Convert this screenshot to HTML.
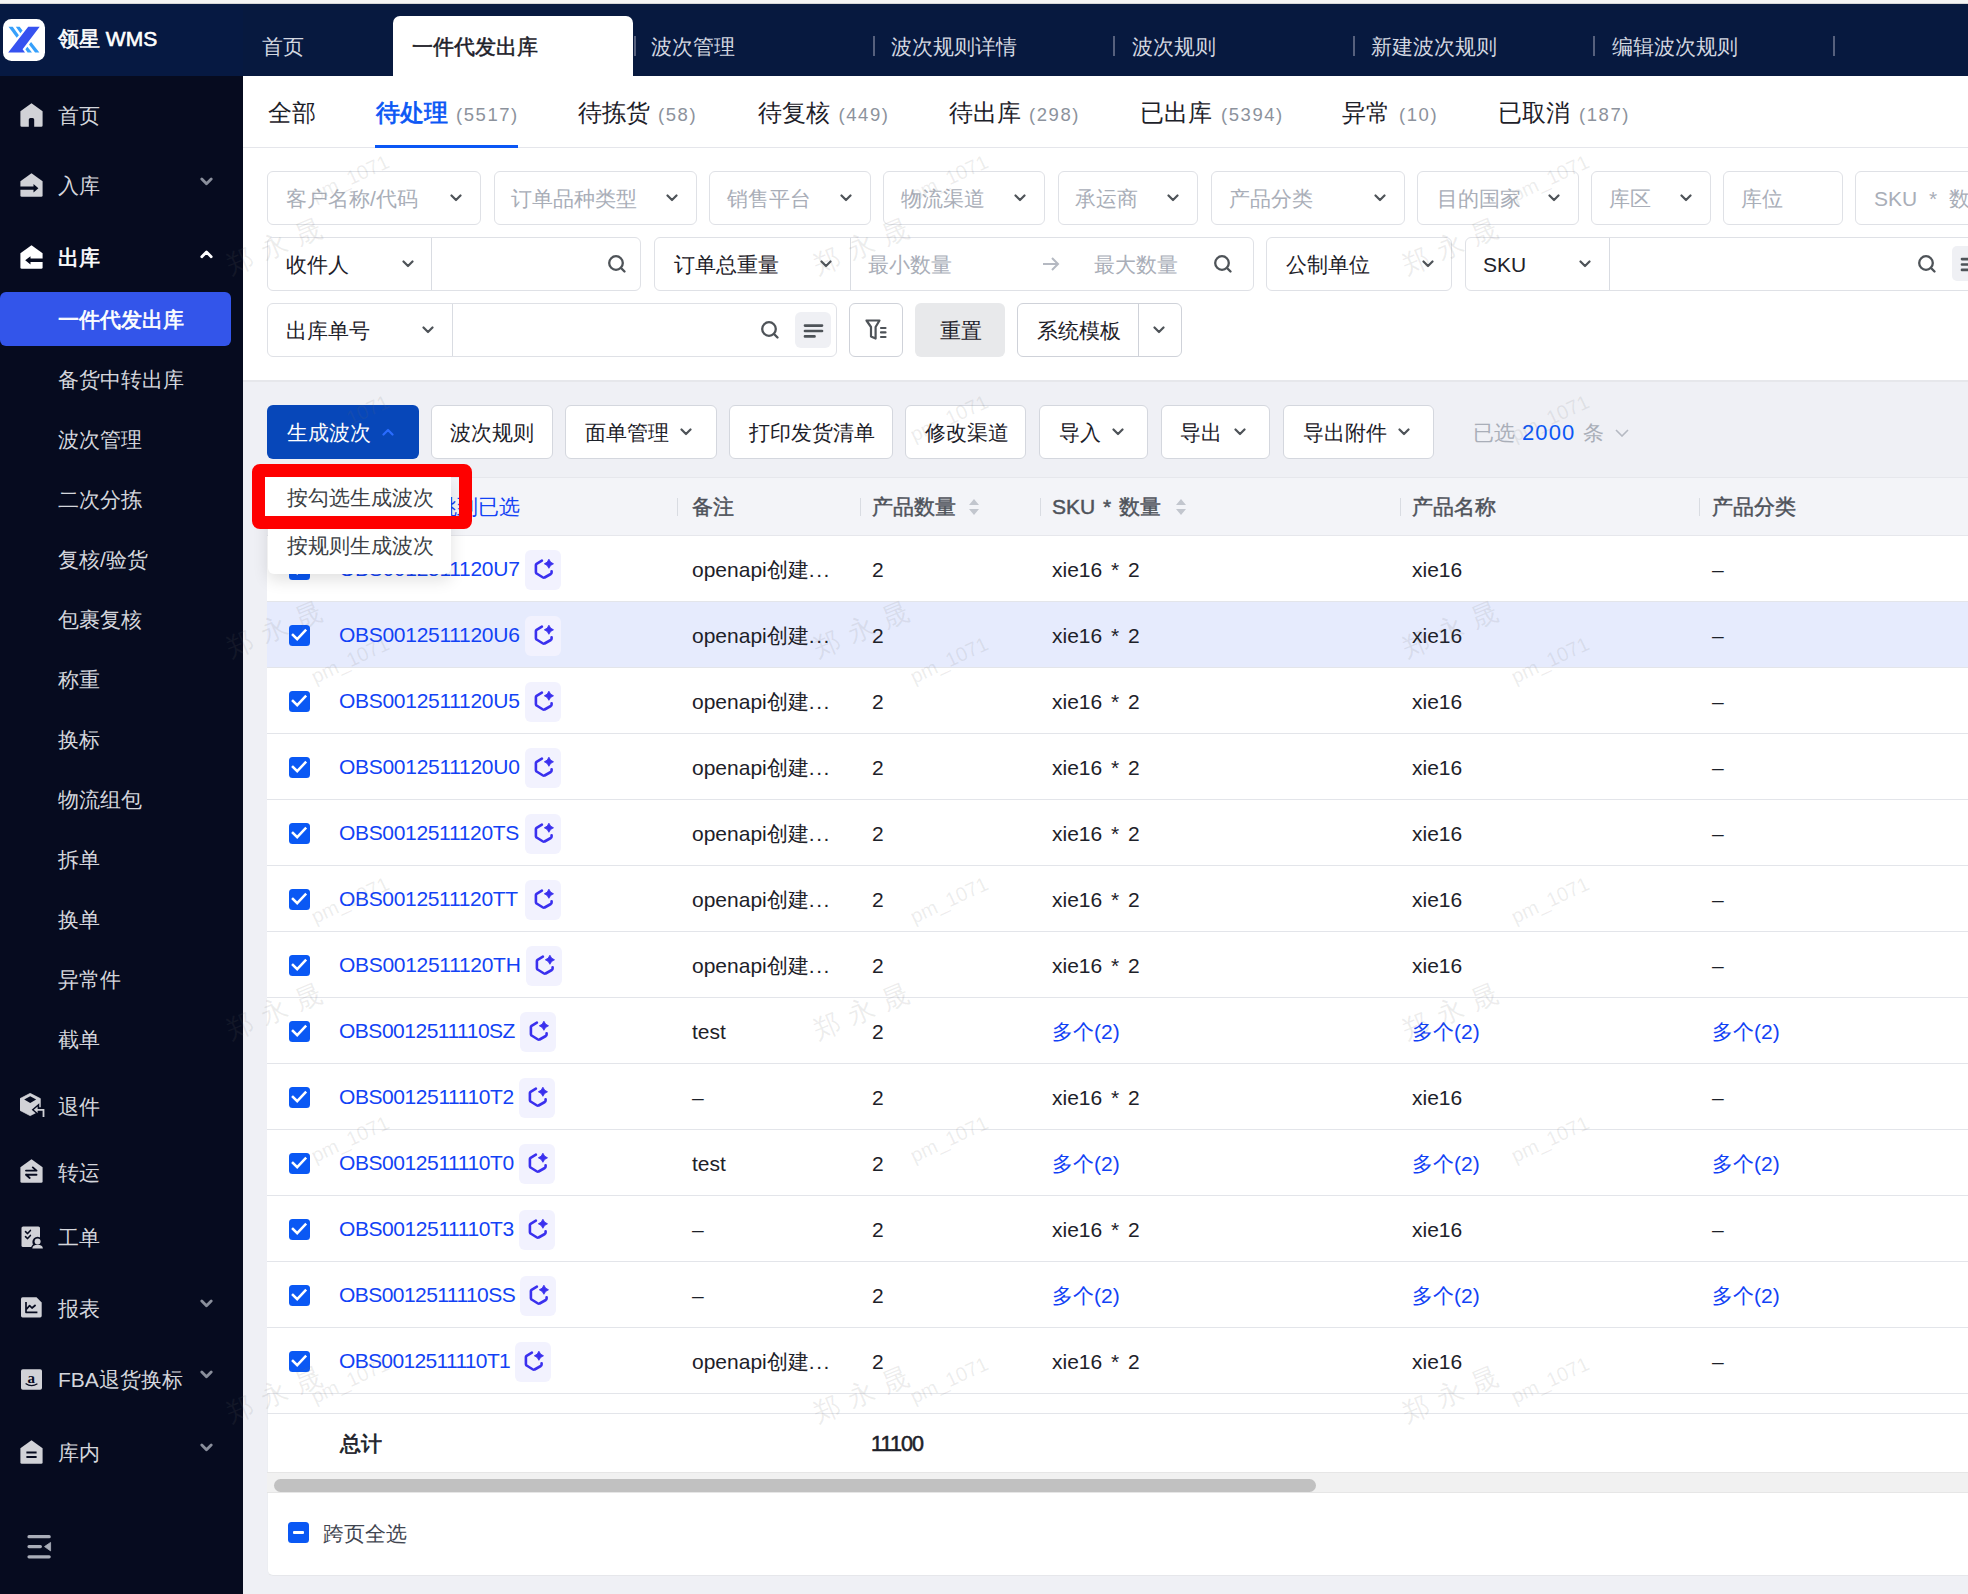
<!DOCTYPE html><html><head><meta charset="utf-8"><style>
*{box-sizing:border-box;margin:0;padding:0}
html,body{width:1968px;height:1594px;overflow:hidden}
body{position:relative;background:#eff0f5;font-family:"Liberation Sans",sans-serif;color:#1d2129;font-size:21px}
.abs{position:absolute}
.t{position:absolute;white-space:nowrap;line-height:1}
.hdr{position:absolute;left:0;top:4px;width:1968px;height:72px;background:linear-gradient(90deg,#061942 0,#061942 243px,#07193f 243px)}
.strip{position:absolute;left:0;top:0;width:1968px;height:4px;background:#f4f4f4;border-bottom:1.5px solid #d6d6d6}
.side{position:absolute;left:0;top:76px;width:243px;height:1518px;background:#060b1f}
.panel{position:absolute;left:243px;top:76px;width:1725px;height:305px;background:#fff}
.box{position:absolute;border:1.5px solid #dfe1e6;border-radius:6px;background:#fff}
.div{position:absolute;top:0;bottom:0;width:1px;background:#d9dce2}
.btn{position:absolute;top:405px;height:54px;border:1.5px solid #d4d7de;border-radius:6px;background:#fff}
.card{position:absolute;left:267px;top:477px;width:1720px;height:1099px;background:#fff;border-radius:0 0 0 6px;border-bottom:1px solid #e6e7eb;border-left:1px solid #eceef2}
.row{position:absolute;left:267px;width:1701px;height:66px;border-bottom:1px solid #e3e5ea}
.cb{position:absolute;left:288.5px;width:21px;height:21px;background:#0a58f4;border-radius:3.5px}
.lnk{color:#1242f5}
.ib{position:absolute;width:36px;height:40.4px;background:#f2f2fe;border-radius:6px}
</style></head><body>
<div class="strip"></div>
<div class="hdr"></div>
<div class="abs" style="left:3px;top:19px;width:42px;height:42px;background:#fff;border-radius:8.5px"></div>
<svg class="abs" style="left:0;top:15px" width="50" height="50" viewBox="0 0 50 50">
<polygon points="28.2,11.8 39.7,11.8 22.6,34.3 25,37.6 8.2,37.6" fill="#3652f0"/>
<polygon points="8.5,11.8 12.7,11.8 18.9,20.3 16.7,22.8" fill="#36a0fb"/>
<polygon points="15.8,11.8 19.6,11.8 22.6,15.4 20.4,18.2" fill="#36a0fb"/>
<polygon points="31.1,27 39.4,37.6 35.1,37.6 29,29.5" fill="#36a0fb"/>
<polygon points="27.4,31.8 32,37.6 27.6,37.6 25.4,34.3" fill="#36a0fb"/>
</svg>
<div class="t" style="left:58px;top:28px;font-size:21px;-webkit-text-stroke:0.6px #fff;color:#fff">领星 WMS</div>
<div class="abs" style="left:393px;top:16px;width:240px;height:60px;background:#fff;border-radius:7px 7px 0 0"></div>
<div class="t" style="left:262px;top:36px;font-size:21px;color:#d3d7e0">首页</div>
<div class="t" style="left:412px;top:36px;font-size:21px;-webkit-text-stroke:0.5px #1d2129;color:#1d2129">一件代发出库</div>
<div class="t" style="left:651px;top:36px;font-size:21px;color:#d3d7e0">波次管理</div>
<div class="t" style="left:891px;top:36px;font-size:21px;color:#d3d7e0">波次规则详情</div>
<div class="t" style="left:1132px;top:36px;font-size:21px;color:#d3d7e0">波次规则</div>
<div class="t" style="left:1371px;top:36px;font-size:21px;color:#d3d7e0">新建波次规则</div>
<div class="t" style="left:1612px;top:36px;font-size:21px;color:#d3d7e0">编辑波次规则</div>
<div class="abs" style="left:634px;top:36px;width:2px;height:20px;background:#56607d"></div>
<div class="abs" style="left:873px;top:36px;width:2px;height:20px;background:#56607d"></div>
<div class="abs" style="left:1113px;top:36px;width:2px;height:20px;background:#56607d"></div>
<div class="abs" style="left:1353px;top:36px;width:2px;height:20px;background:#56607d"></div>
<div class="abs" style="left:1593px;top:36px;width:2px;height:20px;background:#56607d"></div>
<div class="abs" style="left:1833px;top:36px;width:2px;height:20px;background:#56607d"></div>
<div class="side"></div>
<svg class="abs" style="left:20px;top:103px" width="23" height="24" viewBox="0 0 23 24"><path d="M11.5 0.3 L22.6 8.3 V22.4 Q22.6 23.8 21.2 23.8 H14.2 V16.6 Q14.2 15 12.6 15 H10.4 Q8.8 15 8.8 16.6 V23.8 H1.8 Q0.4 23.8 0.4 22.4 V8.3 Z" fill="#d1d2d7"/></svg>
<div class="t" style="left:58px;top:105px;font-size:21px;color:#d4d6dc">首页</div>
<svg class="abs" style="left:20px;top:173px" width="23" height="24" viewBox="0 0 23 24"><path d="M11.5 0.3 L22.6 8.3 V22.4 Q22.6 23.8 21.2 23.8 H1.8 Q0.4 23.8 0.4 22.4 V8.3 Z" fill="#d1d2d7"/><path d="M0 13.6 H13.5 V11 L18.4 15.2 L13.5 19.4 V16.8 H0 Z" fill="#060b1f"/></svg>
<div class="t" style="left:58px;top:175px;font-size:21px;color:#d4d6dc">入库</div>
<svg class="abs" style="left:200px;top:177px" width="13" height="9" viewBox="0 0 13 9"><path d="M1.8 2 L6.5 6.8 L11.2 2" fill="none" stroke="#8a8f9c" stroke-width="2.8" stroke-linecap="round" stroke-linejoin="round"/></svg>
<svg class="abs" style="left:20px;top:245px" width="23" height="24" viewBox="0 0 23 24"><path d="M11.5 0.3 L22.6 8.3 V22.4 Q22.6 23.8 21.2 23.8 H1.8 Q0.4 23.8 0.4 22.4 V8.3 Z" fill="#fff"/><path d="M23 13.6 H10.5 V11.2 L5.2 15.3 L10.5 19.4 V17 H23 Z" fill="#060b1f"/></svg>
<div class="t" style="left:58px;top:247px;font-size:21px;-webkit-text-stroke:0.65px #fff;color:#fff">出库</div>
<svg class="abs" style="left:200px;top:250px" width="13" height="9" viewBox="0 0 13 9"><path d="M1.8 6.8 L6.5 2 L11.2 6.8" fill="none" stroke="#fff" stroke-width="2.8" stroke-linecap="round" stroke-linejoin="round"/></svg>
<div class="abs" style="left:0;top:292px;width:231px;height:54px;background:#3355ea;border-radius:6px"></div>
<div class="t" style="left:58px;top:309px;font-size:21px;-webkit-text-stroke:0.65px #fff;color:#fff">一件代发出库</div>
<div class="t" style="left:58px;top:369px;font-size:21px;color:#d4d6dc">备货中转出库</div>
<div class="t" style="left:58px;top:429px;font-size:21px;color:#d4d6dc">波次管理</div>
<div class="t" style="left:58px;top:489px;font-size:21px;color:#d4d6dc">二次分拣</div>
<div class="t" style="left:58px;top:549px;font-size:21px;color:#d4d6dc">复核/验货</div>
<div class="t" style="left:58px;top:609px;font-size:21px;color:#d4d6dc">包裹复核</div>
<div class="t" style="left:58px;top:669px;font-size:21px;color:#d4d6dc">称重</div>
<div class="t" style="left:58px;top:729px;font-size:21px;color:#d4d6dc">换标</div>
<div class="t" style="left:58px;top:789px;font-size:21px;color:#d4d6dc">物流组包</div>
<div class="t" style="left:58px;top:849px;font-size:21px;color:#d4d6dc">拆单</div>
<div class="t" style="left:58px;top:909px;font-size:21px;color:#d4d6dc">换单</div>
<div class="t" style="left:58px;top:969px;font-size:21px;color:#d4d6dc">异常件</div>
<div class="t" style="left:58px;top:1029px;font-size:21px;color:#d4d6dc">截单</div>
<svg class="abs" style="left:20px;top:1093px" width="26" height="25" viewBox="0 0 26 25"><path d="M10.2 0.3 L20.4 5.6 V17.4 L10.2 22.7 L0 17.4 V5.6 Z" fill="#d1d2d7" stroke="#d1d2d7" stroke-width="0.6" stroke-linejoin="round"/><path d="M10.2 3.2 L16.2 6.6 L10.2 10 L4.2 6.6 Z" fill="#060b1f"/><path d="M24 24 V16.8 H15.5" fill="none" stroke="#060b1f" stroke-width="5"/><path d="M13.6 16.8 L18 13 V20.6 Z" fill="#060b1f" stroke="#060b1f" stroke-width="2.5"/><path d="M23.5 24 V16.8 H16" fill="none" stroke="#d1d2d7" stroke-width="1.8"/><path d="M13.8 16.8 L17.6 13.6 V20 Z" fill="#d1d2d7"/></svg>
<div class="t" style="left:58px;top:1096px;font-size:21px;color:#d4d6dc">退件</div>
<svg class="abs" style="left:20px;top:1159px" width="23" height="24" viewBox="0 0 23 24"><path d="M11.5 0.3 L22.6 8.3 V22.4 Q22.6 23.8 21.2 23.8 H1.8 Q0.4 23.8 0.4 22.4 V8.3 Z" fill="#d1d2d7"/><path d="M6 11.6 H16.5 M12.8 8.4 L16.5 11.6" fill="none" stroke="#060b1f" stroke-width="1.9" stroke-linecap="round"/><path d="M16.5 15.8 H6 M9.7 19 L6 15.8" fill="none" stroke="#060b1f" stroke-width="1.9" stroke-linecap="round"/></svg>
<div class="t" style="left:58px;top:1162px;font-size:21px;color:#d4d6dc">转运</div>
<svg class="abs" style="left:21px;top:1226px" width="24" height="23" viewBox="0 0 24 23"><rect x="0.5" y="0.5" width="18.5" height="20.5" rx="1.6" fill="#d1d2d7"/><path d="M4.5 5.6 L6.6 7.6 L9.4 4.4 M4.5 10.6 L6.6 12.6 L9.4 9.4" fill="none" stroke="#060b1f" stroke-width="1.5" stroke-linecap="round" stroke-linejoin="round"/><circle cx="16.6" cy="16" r="5.2" fill="#060b1f"/><path d="M10 22.6 Q10 17.4 16.6 17.4 Q23.2 17.4 23.2 22.6 Z" fill="#060b1f"/><circle cx="16.6" cy="15.6" r="3" fill="#d1d2d7"/><path d="M11.3 22.4 Q11.6 18.8 16.6 18.8 Q21.6 18.8 21.9 22.4 Z" fill="#d1d2d7"/></svg>
<div class="t" style="left:58px;top:1227px;font-size:21px;color:#d4d6dc">工单</div>
<svg class="abs" style="left:21px;top:1296.6px" width="21" height="21" viewBox="0 0 21 21"><path d="M1.6 0.3 H15.5 L20.7 5.5 V18.8 Q20.7 20.4 19.1 20.4 H1.6 Q0 20.4 0 18.8 V1.9 Q0 0.3 1.6 0.3 Z" fill="#d1d2d7"/><path d="M5 5 V15.3 H16.4 M5.4 12.2 L8.6 8.6 L11 11 L14.6 8" fill="none" stroke="#060b1f" stroke-width="1.7" stroke-linejoin="round"/></svg>
<div class="t" style="left:58px;top:1298px;font-size:21px;color:#d4d6dc">报表</div>
<svg class="abs" style="left:200px;top:1299px" width="13" height="9" viewBox="0 0 13 9"><path d="M1.8 2 L6.5 6.8 L11.2 2" fill="none" stroke="#8a8f9c" stroke-width="2.8" stroke-linecap="round" stroke-linejoin="round"/></svg>
<svg class="abs" style="left:21px;top:1368.5px" width="21" height="21" viewBox="0 0 21 21"><rect x="0" y="0.3" width="21" height="20.4" rx="1.8" fill="#d1d2d7"/><text x="10.2" y="13.6" font-family="Liberation Serif" font-size="15" font-weight="bold" text-anchor="middle" fill="#060b1f">a</text><path d="M4.6 14.4 Q10.2 18.6 16.4 14.8" fill="none" stroke="#060b1f" stroke-width="1.2"/></svg>
<div class="t" style="left:58px;top:1369px;font-size:21px;color:#d4d6dc">FBA退货换标</div>
<svg class="abs" style="left:200px;top:1370px" width="13" height="9" viewBox="0 0 13 9"><path d="M1.8 2 L6.5 6.8 L11.2 2" fill="none" stroke="#8a8f9c" stroke-width="2.8" stroke-linecap="round" stroke-linejoin="round"/></svg>
<svg class="abs" style="left:20px;top:1439.5px" width="23" height="24" viewBox="0 0 23 24"><path d="M11.5 0.3 L22.6 8.3 V22.4 Q22.6 23.8 21.2 23.8 H1.8 Q0.4 23.8 0.4 22.4 V8.3 Z" fill="#d1d2d7"/><path d="M6.4 12.6 H16.6 M6.4 17 H16.6" fill="none" stroke="#060b1f" stroke-width="2"/></svg>
<div class="t" style="left:58px;top:1442px;font-size:21px;color:#d4d6dc">库内</div>
<svg class="abs" style="left:200px;top:1443px" width="13" height="9" viewBox="0 0 13 9"><path d="M1.8 2 L6.5 6.8 L11.2 2" fill="none" stroke="#8a8f9c" stroke-width="2.8" stroke-linecap="round" stroke-linejoin="round"/></svg>
<svg class="abs" style="left:25px;top:1532px" width="28" height="28" viewBox="0 0 28 28"><path d="M4 4.7 H24.2 M4 14.6 H15.4 M4 24.8 H24.2" stroke="#aaaeb9" stroke-width="3.2" stroke-linecap="round"/><path d="M19.5 14.6 L25.6 10.4 V18.9 Z" fill="#aaaeb9" stroke="#aaaeb9" stroke-width="0.8" stroke-linejoin="round"/></svg>
<div class="panel"></div>
<div class="abs" style="left:243px;top:146.5px;width:1725px;height:1.5px;background:#e5e6eb"></div>
<div class="abs" style="left:243px;top:380px;width:1725px;height:1.5px;background:#e6e7eb"></div>
<div class="t" style="left:268px;top:101px;font-size:24px;color:#1d2129">全部</div>
<div class="t" style="left:375.5px;top:101px;font-size:24px;-webkit-text-stroke:0.75px #0b57f5;color:#0b57f5">待处理</div>
<div class="t" style="left:456px;top:106px;font-size:18.5px;letter-spacing:1.55px;color:#8c929c">(5517)</div>
<div class="t" style="left:578px;top:101px;font-size:24px;color:#1d2129">待拣货</div>
<div class="t" style="left:658px;top:106px;font-size:18.5px;letter-spacing:1.55px;color:#8c929c">(58)</div>
<div class="t" style="left:757.5px;top:101px;font-size:24px;color:#1d2129">待复核</div>
<div class="t" style="left:838.5px;top:106px;font-size:18.5px;letter-spacing:1.55px;color:#8c929c">(449)</div>
<div class="t" style="left:949px;top:101px;font-size:24px;color:#1d2129">待出库</div>
<div class="t" style="left:1029px;top:106px;font-size:18.5px;letter-spacing:1.55px;color:#8c929c">(298)</div>
<div class="t" style="left:1140px;top:101px;font-size:24px;color:#1d2129">已出库</div>
<div class="t" style="left:1221px;top:106px;font-size:18.5px;letter-spacing:1.55px;color:#8c929c">(5394)</div>
<div class="t" style="left:1342px;top:101px;font-size:24px;color:#1d2129">异常</div>
<div class="t" style="left:1399px;top:106px;font-size:18.5px;letter-spacing:1.55px;color:#8c929c">(10)</div>
<div class="t" style="left:1498px;top:101px;font-size:24px;color:#1d2129">已取消</div>
<div class="t" style="left:1579px;top:106px;font-size:18.5px;letter-spacing:1.55px;color:#8c929c">(187)</div>
<div class="abs" style="left:375px;top:145px;width:143px;height:3px;background:#0b57f5"></div>
<div class="box" style="left:267px;top:171px;width:214px;height:54px"></div>
<div class="t" style="left:286px;top:188px;font-size:21px;word-spacing:6px;color:#a9aeb8">客户名称/代码</div>
<svg class="abs" style="left:450px;top:194px" width="12" height="8" viewBox="0 0 12 8"><path d="M1.5 1.5 L6 6 L10.5 1.5" fill="none" stroke="#4e5358" stroke-width="2.2" stroke-linecap="round" stroke-linejoin="round"/></svg>
<div class="box" style="left:494px;top:171px;width:203px;height:54px"></div>
<div class="t" style="left:511px;top:188px;font-size:21px;word-spacing:6px;color:#a9aeb8">订单品种类型</div>
<svg class="abs" style="left:666px;top:194px" width="12" height="8" viewBox="0 0 12 8"><path d="M1.5 1.5 L6 6 L10.5 1.5" fill="none" stroke="#4e5358" stroke-width="2.2" stroke-linecap="round" stroke-linejoin="round"/></svg>
<div class="box" style="left:709px;top:171px;width:162px;height:54px"></div>
<div class="t" style="left:727px;top:188px;font-size:21px;word-spacing:6px;color:#a9aeb8">销售平台</div>
<svg class="abs" style="left:840px;top:194px" width="12" height="8" viewBox="0 0 12 8"><path d="M1.5 1.5 L6 6 L10.5 1.5" fill="none" stroke="#4e5358" stroke-width="2.2" stroke-linecap="round" stroke-linejoin="round"/></svg>
<div class="box" style="left:883px;top:171px;width:162px;height:54px"></div>
<div class="t" style="left:901px;top:188px;font-size:21px;word-spacing:6px;color:#a9aeb8">物流渠道</div>
<svg class="abs" style="left:1014px;top:194px" width="12" height="8" viewBox="0 0 12 8"><path d="M1.5 1.5 L6 6 L10.5 1.5" fill="none" stroke="#4e5358" stroke-width="2.2" stroke-linecap="round" stroke-linejoin="round"/></svg>
<div class="box" style="left:1058px;top:171px;width:140px;height:54px"></div>
<div class="t" style="left:1075px;top:188px;font-size:21px;word-spacing:6px;color:#a9aeb8">承运商</div>
<svg class="abs" style="left:1167px;top:194px" width="12" height="8" viewBox="0 0 12 8"><path d="M1.5 1.5 L6 6 L10.5 1.5" fill="none" stroke="#4e5358" stroke-width="2.2" stroke-linecap="round" stroke-linejoin="round"/></svg>
<div class="box" style="left:1211px;top:171px;width:194px;height:54px"></div>
<div class="t" style="left:1229px;top:188px;font-size:21px;word-spacing:6px;color:#a9aeb8">产品分类</div>
<svg class="abs" style="left:1374px;top:194px" width="12" height="8" viewBox="0 0 12 8"><path d="M1.5 1.5 L6 6 L10.5 1.5" fill="none" stroke="#4e5358" stroke-width="2.2" stroke-linecap="round" stroke-linejoin="round"/></svg>
<div class="box" style="left:1417px;top:171px;width:162px;height:54px"></div>
<div class="t" style="left:1437px;top:188px;font-size:21px;word-spacing:6px;color:#a9aeb8">目的国家</div>
<svg class="abs" style="left:1548px;top:194px" width="12" height="8" viewBox="0 0 12 8"><path d="M1.5 1.5 L6 6 L10.5 1.5" fill="none" stroke="#4e5358" stroke-width="2.2" stroke-linecap="round" stroke-linejoin="round"/></svg>
<div class="box" style="left:1591px;top:171px;width:120px;height:54px"></div>
<div class="t" style="left:1609px;top:188px;font-size:21px;word-spacing:6px;color:#a9aeb8">库区</div>
<svg class="abs" style="left:1680px;top:194px" width="12" height="8" viewBox="0 0 12 8"><path d="M1.5 1.5 L6 6 L10.5 1.5" fill="none" stroke="#4e5358" stroke-width="2.2" stroke-linecap="round" stroke-linejoin="round"/></svg>
<div class="box" style="left:1723px;top:171px;width:120px;height:54px"></div>
<div class="t" style="left:1741px;top:188px;font-size:21px;word-spacing:6px;color:#a9aeb8">库位</div>
<div class="box" style="left:1855px;top:171px;width:245px;height:54px"></div>
<div class="t" style="left:1874px;top:188px;font-size:21px;word-spacing:6px;color:#a9aeb8">SKU&nbsp;*&nbsp;数量</div>
<div class="box" style="left:267px;top:237px;width:374px;height:54px"><div class="div" style="left:163px"></div></div>
<div class="t" style="left:286px;top:254px;font-size:21px">收件人</div><svg class="abs" style="left:401.5px;top:260px" width="12" height="8" viewBox="0 0 12 8"><path d="M1.5 1.5 L6 6 L10.5 1.5" fill="none" stroke="#4e5358" stroke-width="2.2" stroke-linecap="round" stroke-linejoin="round"/></svg><svg class="abs" style="left:607px;top:254px" width="20" height="20" viewBox="0 0 20 20"><circle cx="9" cy="9" r="6.8" fill="none" stroke="#4e5358" stroke-width="2.3"/><path d="M14 14 L17.5 17.5" stroke="#4e5358" stroke-width="2.4" stroke-linecap="round"/></svg>
<div class="box" style="left:654px;top:237px;width:600px;height:54px"><div class="div" style="left:194.5px"></div></div>
<div class="t" style="left:673.5px;top:254px;font-size:21px">订单总重量</div><svg class="abs" style="left:819.7px;top:260px" width="12" height="8" viewBox="0 0 12 8"><path d="M1.5 1.5 L6 6 L10.5 1.5" fill="none" stroke="#4e5358" stroke-width="2.2" stroke-linecap="round" stroke-linejoin="round"/></svg>
<div class="t" style="left:868px;top:254px;font-size:21px;color:#a9aeb8">最小数量</div>
<div class="t" style="left:1094px;top:254px;font-size:21px;color:#a9aeb8">最大数量</div>
<svg class="abs" style="left:1041px;top:255px" width="20" height="18" viewBox="0 0 20 18"><path d="M2 9 H17 M11 3 L17 9 L11 15" fill="none" stroke="#b5b9c2" stroke-width="2"/></svg>
<svg class="abs" style="left:1212.7px;top:254px" width="20" height="20" viewBox="0 0 20 20"><circle cx="9" cy="9" r="6.8" fill="none" stroke="#4e5358" stroke-width="2.3"/><path d="M14 14 L17.5 17.5" stroke="#4e5358" stroke-width="2.4" stroke-linecap="round"/></svg>
<div class="box" style="left:1266px;top:237px;width:186px;height:54px"></div>
<div class="t" style="left:1286px;top:254px;font-size:21px">公制单位</div><svg class="abs" style="left:1422px;top:260px" width="12" height="8" viewBox="0 0 12 8"><path d="M1.5 1.5 L6 6 L10.5 1.5" fill="none" stroke="#4e5358" stroke-width="2.2" stroke-linecap="round" stroke-linejoin="round"/></svg>
<div class="box" style="left:1465px;top:237px;width:600px;height:54px"><div class="div" style="left:143px"></div></div>
<div class="t" style="left:1483px;top:254px;font-size:21px">SKU</div><svg class="abs" style="left:1578.7px;top:260px" width="12" height="8" viewBox="0 0 12 8"><path d="M1.5 1.5 L6 6 L10.5 1.5" fill="none" stroke="#4e5358" stroke-width="2.2" stroke-linecap="round" stroke-linejoin="round"/></svg><svg class="abs" style="left:1917px;top:254px" width="20" height="20" viewBox="0 0 20 20"><circle cx="9" cy="9" r="6.8" fill="none" stroke="#4e5358" stroke-width="2.3"/><path d="M14 14 L17.5 17.5" stroke="#4e5358" stroke-width="2.4" stroke-linecap="round"/></svg>
<div class="abs" style="left:1952px;top:246px;width:36px;height:35px;background:#eff0f4;border-radius:5px"></div>
<svg class="abs" style="left:1952px;top:246px" width="36" height="35" viewBox="0 0 36 35"><path d="M10 13.1 H27 M10 18.5 H27 M10 23.9 H19.5" stroke="#4e5358" stroke-width="2.7" stroke-linecap="round"/></svg>
<div class="box" style="left:267px;top:303px;width:570px;height:54px"><div class="div" style="left:184px"></div></div>
<div class="t" style="left:286px;top:320px;font-size:21px">出库单号</div><svg class="abs" style="left:422px;top:326px" width="12" height="8" viewBox="0 0 12 8"><path d="M1.5 1.5 L6 6 L10.5 1.5" fill="none" stroke="#4e5358" stroke-width="2.2" stroke-linecap="round" stroke-linejoin="round"/></svg><svg class="abs" style="left:760px;top:320px" width="20" height="20" viewBox="0 0 20 20"><circle cx="9" cy="9" r="6.8" fill="none" stroke="#4e5358" stroke-width="2.3"/><path d="M14 14 L17.5 17.5" stroke="#4e5358" stroke-width="2.4" stroke-linecap="round"/></svg>
<div class="abs" style="left:795px;top:312px;width:36px;height:36px;background:#eff0f4;border-radius:6px"></div>
<svg class="abs" style="left:795px;top:312px" width="36" height="36" viewBox="0 0 36 36"><path d="M10 13.6 H27 M10 19 H27 M10 24.4 H19.5" stroke="#4e5358" stroke-width="2.7" stroke-linecap="round"/></svg>
<div class="box" style="left:849px;top:303px;width:54px;height:54px;border-color:#cfd2d9"></div>
<svg class="abs" style="left:862px;top:316px" width="28" height="28" viewBox="0 0 28 28"><path d="M4.5 4.5 H17.5 L13.6 11 V22.6 L9 20.6 V11 Z" fill="none" stroke="#4e5358" stroke-width="2.2" stroke-linejoin="round"/><path d="M19 12 H23.5 M19 16.4 H23.5 M19 21 H23.5" stroke="#4e5358" stroke-width="2.2" stroke-linecap="round"/></svg>
<div class="abs" style="left:915px;top:303px;width:90px;height:54px;background:#e8e9eb;border-radius:6px"></div>
<div class="t" style="left:940px;top:320px;font-size:21px">重置</div>
<div class="box" style="left:1017px;top:303px;width:165px;height:54px;border-color:#cfd2d9"><div class="div" style="left:120px;background:#cfd2d9"></div></div>
<div class="t" style="left:1037px;top:320px;font-size:21px">系统模板</div><svg class="abs" style="left:1153.4px;top:326px" width="12" height="8" viewBox="0 0 12 8"><path d="M1.5 1.5 L6 6 L10.5 1.5" fill="none" stroke="#4e5358" stroke-width="2.2" stroke-linecap="round" stroke-linejoin="round"/></svg>
<div class="abs" style="left:267px;top:405px;width:152px;height:54px;background:#0747b9;border-radius:6px"></div>
<div class="t" style="left:287px;top:422px;font-size:21px;color:#fff">生成波次</div>
<svg class="abs" style="left:382px;top:428px" width="12" height="8" viewBox="0 0 12 8"><path d="M1.5 6.5 L6 2 L10.5 6.5" fill="none" stroke="#2a6cff" stroke-width="2.2" stroke-linecap="round" stroke-linejoin="round"/></svg>
<div class="btn" style="left:431px;width:122px"></div>
<div class="t" style="left:450px;top:422px;font-size:21px">波次规则</div>
<div class="btn" style="left:565px;width:152px"></div>
<div class="t" style="left:585px;top:422px;font-size:21px">面单管理</div>
<svg class="abs" style="left:680px;top:428px" width="12" height="8" viewBox="0 0 12 8"><path d="M1.5 1.5 L6 6 L10.5 1.5" fill="none" stroke="#4e5358" stroke-width="2.2" stroke-linecap="round" stroke-linejoin="round"/></svg>
<div class="btn" style="left:729px;width:164px"></div>
<div class="t" style="left:749px;top:422px;font-size:21px">打印发货清单</div>
<div class="btn" style="left:905px;width:121px"></div>
<div class="t" style="left:925px;top:422px;font-size:21px">修改渠道</div>
<div class="btn" style="left:1039px;width:109px"></div>
<div class="t" style="left:1059px;top:422px;font-size:21px">导入</div>
<svg class="abs" style="left:1112px;top:428px" width="12" height="8" viewBox="0 0 12 8"><path d="M1.5 1.5 L6 6 L10.5 1.5" fill="none" stroke="#4e5358" stroke-width="2.2" stroke-linecap="round" stroke-linejoin="round"/></svg>
<div class="btn" style="left:1161px;width:109px"></div>
<div class="t" style="left:1180px;top:422px;font-size:21px">导出</div>
<svg class="abs" style="left:1234px;top:428px" width="12" height="8" viewBox="0 0 12 8"><path d="M1.5 1.5 L6 6 L10.5 1.5" fill="none" stroke="#4e5358" stroke-width="2.2" stroke-linecap="round" stroke-linejoin="round"/></svg>
<div class="btn" style="left:1283px;width:151px"></div>
<div class="t" style="left:1303px;top:422px;font-size:21px">导出附件</div>
<svg class="abs" style="left:1398px;top:428px" width="12" height="8" viewBox="0 0 12 8"><path d="M1.5 1.5 L6 6 L10.5 1.5" fill="none" stroke="#4e5358" stroke-width="2.2" stroke-linecap="round" stroke-linejoin="round"/></svg>
<div class="t" style="left:1473px;top:422px;font-size:21px;color:#a9aeb8">已选</div>
<div class="t" style="left:1522px;top:421.5px;font-size:22px;letter-spacing:1.1px;color:#0b57f5">2000</div>
<div class="t" style="left:1583px;top:422px;font-size:21px;color:#a9aeb8">条</div>
<svg class="abs" style="left:1614.5px;top:428.5px" width="14" height="8" viewBox="0 0 14 8"><path d="M1 1 L7 7 L13 1" fill="none" stroke="#b5b9c2" stroke-width="1.6"/></svg>
<div class="card"></div>
<div class="abs" style="left:267px;top:477px;width:1701px;height:59px;background:#f3f4f8;border-top:1.5px solid #e6e7ec;border-bottom:1.5px solid #e6e7ec"></div>
<div class="t lnk" style="left:436px;top:496px;font-size:21px">跳到已选</div>
<div class="abs" style="left:677px;top:498px;width:1px;height:18px;background:#d9dce2"></div>
<div class="abs" style="left:860px;top:498px;width:1px;height:18px;background:#d9dce2"></div>
<div class="abs" style="left:1040px;top:498px;width:1px;height:18px;background:#d9dce2"></div>
<div class="abs" style="left:1400px;top:498px;width:1px;height:18px;background:#d9dce2"></div>
<div class="abs" style="left:1699px;top:498px;width:1px;height:18px;background:#d9dce2"></div>
<div class="t" style="left:692px;top:496px;font-size:21px;-webkit-text-stroke:0.45px #4e525a;word-spacing:2px;color:#4e525a">备注</div>
<div class="t" style="left:872px;top:496px;font-size:21px;-webkit-text-stroke:0.45px #4e525a;word-spacing:2px;color:#4e525a">产品数量</div>
<div class="t" style="left:1052px;top:496px;font-size:21px;-webkit-text-stroke:0.45px #4e525a;word-spacing:2px;color:#4e525a">SKU&nbsp;*&nbsp;数量</div>
<div class="t" style="left:1412px;top:496px;font-size:21px;-webkit-text-stroke:0.45px #4e525a;word-spacing:2px;color:#4e525a">产品名称</div>
<div class="t" style="left:1712px;top:496px;font-size:21px;-webkit-text-stroke:0.45px #4e525a;word-spacing:2px;color:#4e525a">产品分类</div>
<svg class="abs" style="left:968px;top:497px" width="12" height="20" viewBox="0 0 12 20"><path d="M6 2 L11 8 H1 Z M6 18 L11 12 H1 Z" fill="#c2c6ce"/></svg><svg class="abs" style="left:1175px;top:497px" width="12" height="20" viewBox="0 0 12 20"><path d="M6 2 L11 8 H1 Z M6 18 L11 12 H1 Z" fill="#c2c6ce"/></svg>
<div class="row" style="top:536px;background:#fff"></div>
<div class="cb" style="top:558.5px"><svg width="21" height="21" viewBox="0 0 21 21"><path d="M3.9 9.9 L8.2 14.2 L16.3 5.6" fill="none" stroke="#fff" stroke-width="2.5" stroke-linecap="square"/></svg></div>
<div class="t lnk" style="left:339px;top:558px;font-size:21px;letter-spacing:-0.29px">OBS0012511120U7</div>
<div class="ib" style="left:525.0px;top:549.8px"><svg width="36" height="40" viewBox="0 0 36 40"><path d="M16.9 10.6 L11.6 13.8 Q10.9 14.3 10.9 15.1 V22.3 Q10.9 23.1 11.6 23.5 L18 27.5 Q18.8 28 19.6 27.5 L25.8 24 Q26.6 23.5 26.6 22.6 V21.3" fill="none" stroke="#3a30ee" stroke-width="2.6" stroke-linecap="round" stroke-linejoin="round"/><path d="M23.9 9.2 Q25 12.7 28.5 13.8 Q25 14.9 23.9 18.3 Q22.8 14.9 19.3 13.8 Q22.8 12.7 23.9 9.2 Z" fill="#3a30ee" stroke="#3a30ee" stroke-width="0.8" stroke-linejoin="round"/></svg></div>
<div class="t" style="left:692px;top:559px;font-size:21px">openapi创建<span style="letter-spacing:1.6px">...</span></div>
<div class="t" style="left:872px;top:559px;font-size:21px">2</div>
<div class="t" style="left:1052px;top:559px;font-size:21px;word-spacing:3px">xie16 * 2</div>
<div class="t" style="left:1412px;top:559px;font-size:21px">xie16</div>
<div class="t" style="left:1712px;top:559px;font-size:21px">–</div>
<div class="row" style="top:602px;background:#e6ebfd"></div>
<div class="cb" style="top:624.5px"><svg width="21" height="21" viewBox="0 0 21 21"><path d="M3.9 9.9 L8.2 14.2 L16.3 5.6" fill="none" stroke="#fff" stroke-width="2.5" stroke-linecap="square"/></svg></div>
<div class="t lnk" style="left:339px;top:624px;font-size:21px;letter-spacing:-0.29px">OBS0012511120U6</div>
<div class="ib" style="left:524.8px;top:615.8px"><svg width="36" height="40" viewBox="0 0 36 40"><path d="M16.9 10.6 L11.6 13.8 Q10.9 14.3 10.9 15.1 V22.3 Q10.9 23.1 11.6 23.5 L18 27.5 Q18.8 28 19.6 27.5 L25.8 24 Q26.6 23.5 26.6 22.6 V21.3" fill="none" stroke="#3a30ee" stroke-width="2.6" stroke-linecap="round" stroke-linejoin="round"/><path d="M23.9 9.2 Q25 12.7 28.5 13.8 Q25 14.9 23.9 18.3 Q22.8 14.9 19.3 13.8 Q22.8 12.7 23.9 9.2 Z" fill="#3a30ee" stroke="#3a30ee" stroke-width="0.8" stroke-linejoin="round"/></svg></div>
<div class="t" style="left:692px;top:625px;font-size:21px">openapi创建<span style="letter-spacing:1.6px">...</span></div>
<div class="t" style="left:872px;top:625px;font-size:21px">2</div>
<div class="t" style="left:1052px;top:625px;font-size:21px;word-spacing:3px">xie16 * 2</div>
<div class="t" style="left:1412px;top:625px;font-size:21px">xie16</div>
<div class="t" style="left:1712px;top:625px;font-size:21px">–</div>
<div class="row" style="top:668px;background:#fff"></div>
<div class="cb" style="top:690.5px"><svg width="21" height="21" viewBox="0 0 21 21"><path d="M3.9 9.9 L8.2 14.2 L16.3 5.6" fill="none" stroke="#fff" stroke-width="2.5" stroke-linecap="square"/></svg></div>
<div class="t lnk" style="left:339px;top:690px;font-size:21px;letter-spacing:-0.29px">OBS0012511120U5</div>
<div class="ib" style="left:525.0px;top:681.8px"><svg width="36" height="40" viewBox="0 0 36 40"><path d="M16.9 10.6 L11.6 13.8 Q10.9 14.3 10.9 15.1 V22.3 Q10.9 23.1 11.6 23.5 L18 27.5 Q18.8 28 19.6 27.5 L25.8 24 Q26.6 23.5 26.6 22.6 V21.3" fill="none" stroke="#3a30ee" stroke-width="2.6" stroke-linecap="round" stroke-linejoin="round"/><path d="M23.9 9.2 Q25 12.7 28.5 13.8 Q25 14.9 23.9 18.3 Q22.8 14.9 19.3 13.8 Q22.8 12.7 23.9 9.2 Z" fill="#3a30ee" stroke="#3a30ee" stroke-width="0.8" stroke-linejoin="round"/></svg></div>
<div class="t" style="left:692px;top:691px;font-size:21px">openapi创建<span style="letter-spacing:1.6px">...</span></div>
<div class="t" style="left:872px;top:691px;font-size:21px">2</div>
<div class="t" style="left:1052px;top:691px;font-size:21px;word-spacing:3px">xie16 * 2</div>
<div class="t" style="left:1412px;top:691px;font-size:21px">xie16</div>
<div class="t" style="left:1712px;top:691px;font-size:21px">–</div>
<div class="row" style="top:734px;background:#fff"></div>
<div class="cb" style="top:756.5px"><svg width="21" height="21" viewBox="0 0 21 21"><path d="M3.9 9.9 L8.2 14.2 L16.3 5.6" fill="none" stroke="#fff" stroke-width="2.5" stroke-linecap="square"/></svg></div>
<div class="t lnk" style="left:339px;top:756px;font-size:21px;letter-spacing:-0.29px">OBS0012511120U0</div>
<div class="ib" style="left:525.0px;top:747.8px"><svg width="36" height="40" viewBox="0 0 36 40"><path d="M16.9 10.6 L11.6 13.8 Q10.9 14.3 10.9 15.1 V22.3 Q10.9 23.1 11.6 23.5 L18 27.5 Q18.8 28 19.6 27.5 L25.8 24 Q26.6 23.5 26.6 22.6 V21.3" fill="none" stroke="#3a30ee" stroke-width="2.6" stroke-linecap="round" stroke-linejoin="round"/><path d="M23.9 9.2 Q25 12.7 28.5 13.8 Q25 14.9 23.9 18.3 Q22.8 14.9 19.3 13.8 Q22.8 12.7 23.9 9.2 Z" fill="#3a30ee" stroke="#3a30ee" stroke-width="0.8" stroke-linejoin="round"/></svg></div>
<div class="t" style="left:692px;top:757px;font-size:21px">openapi创建<span style="letter-spacing:1.6px">...</span></div>
<div class="t" style="left:872px;top:757px;font-size:21px">2</div>
<div class="t" style="left:1052px;top:757px;font-size:21px;word-spacing:3px">xie16 * 2</div>
<div class="t" style="left:1412px;top:757px;font-size:21px">xie16</div>
<div class="t" style="left:1712px;top:757px;font-size:21px">–</div>
<div class="row" style="top:800px;background:#fff"></div>
<div class="cb" style="top:822.5px"><svg width="21" height="21" viewBox="0 0 21 21"><path d="M3.9 9.9 L8.2 14.2 L16.3 5.6" fill="none" stroke="#fff" stroke-width="2.5" stroke-linecap="square"/></svg></div>
<div class="t lnk" style="left:339px;top:822px;font-size:21px;letter-spacing:-0.33px">OBS0012511120TS</div>
<div class="ib" style="left:524.6px;top:813.8px"><svg width="36" height="40" viewBox="0 0 36 40"><path d="M16.9 10.6 L11.6 13.8 Q10.9 14.3 10.9 15.1 V22.3 Q10.9 23.1 11.6 23.5 L18 27.5 Q18.8 28 19.6 27.5 L25.8 24 Q26.6 23.5 26.6 22.6 V21.3" fill="none" stroke="#3a30ee" stroke-width="2.6" stroke-linecap="round" stroke-linejoin="round"/><path d="M23.9 9.2 Q25 12.7 28.5 13.8 Q25 14.9 23.9 18.3 Q22.8 14.9 19.3 13.8 Q22.8 12.7 23.9 9.2 Z" fill="#3a30ee" stroke="#3a30ee" stroke-width="0.8" stroke-linejoin="round"/></svg></div>
<div class="t" style="left:692px;top:823px;font-size:21px">openapi创建<span style="letter-spacing:1.6px">...</span></div>
<div class="t" style="left:872px;top:823px;font-size:21px">2</div>
<div class="t" style="left:1052px;top:823px;font-size:21px;word-spacing:3px">xie16 * 2</div>
<div class="t" style="left:1412px;top:823px;font-size:21px">xie16</div>
<div class="t" style="left:1712px;top:823px;font-size:21px">–</div>
<div class="row" style="top:866px;background:#fff"></div>
<div class="cb" style="top:888.5px"><svg width="21" height="21" viewBox="0 0 21 21"><path d="M3.9 9.9 L8.2 14.2 L16.3 5.6" fill="none" stroke="#fff" stroke-width="2.5" stroke-linecap="square"/></svg></div>
<div class="t lnk" style="left:339px;top:888px;font-size:21px;letter-spacing:-0.33px">OBS0012511120TT</div>
<div class="ib" style="left:524.6px;top:879.8px"><svg width="36" height="40" viewBox="0 0 36 40"><path d="M16.9 10.6 L11.6 13.8 Q10.9 14.3 10.9 15.1 V22.3 Q10.9 23.1 11.6 23.5 L18 27.5 Q18.8 28 19.6 27.5 L25.8 24 Q26.6 23.5 26.6 22.6 V21.3" fill="none" stroke="#3a30ee" stroke-width="2.6" stroke-linecap="round" stroke-linejoin="round"/><path d="M23.9 9.2 Q25 12.7 28.5 13.8 Q25 14.9 23.9 18.3 Q22.8 14.9 19.3 13.8 Q22.8 12.7 23.9 9.2 Z" fill="#3a30ee" stroke="#3a30ee" stroke-width="0.8" stroke-linejoin="round"/></svg></div>
<div class="t" style="left:692px;top:889px;font-size:21px">openapi创建<span style="letter-spacing:1.6px">...</span></div>
<div class="t" style="left:872px;top:889px;font-size:21px">2</div>
<div class="t" style="left:1052px;top:889px;font-size:21px;word-spacing:3px">xie16 * 2</div>
<div class="t" style="left:1412px;top:889px;font-size:21px">xie16</div>
<div class="t" style="left:1712px;top:889px;font-size:21px">–</div>
<div class="row" style="top:932px;background:#fff"></div>
<div class="cb" style="top:954.5px"><svg width="21" height="21" viewBox="0 0 21 21"><path d="M3.9 9.9 L8.2 14.2 L16.3 5.6" fill="none" stroke="#fff" stroke-width="2.5" stroke-linecap="square"/></svg></div>
<div class="t lnk" style="left:339px;top:954px;font-size:21px;letter-spacing:-0.3px">OBS0012511120TH</div>
<div class="ib" style="left:526.1px;top:945.8px"><svg width="36" height="40" viewBox="0 0 36 40"><path d="M16.9 10.6 L11.6 13.8 Q10.9 14.3 10.9 15.1 V22.3 Q10.9 23.1 11.6 23.5 L18 27.5 Q18.8 28 19.6 27.5 L25.8 24 Q26.6 23.5 26.6 22.6 V21.3" fill="none" stroke="#3a30ee" stroke-width="2.6" stroke-linecap="round" stroke-linejoin="round"/><path d="M23.9 9.2 Q25 12.7 28.5 13.8 Q25 14.9 23.9 18.3 Q22.8 14.9 19.3 13.8 Q22.8 12.7 23.9 9.2 Z" fill="#3a30ee" stroke="#3a30ee" stroke-width="0.8" stroke-linejoin="round"/></svg></div>
<div class="t" style="left:692px;top:955px;font-size:21px">openapi创建<span style="letter-spacing:1.6px">...</span></div>
<div class="t" style="left:872px;top:955px;font-size:21px">2</div>
<div class="t" style="left:1052px;top:955px;font-size:21px;word-spacing:3px">xie16 * 2</div>
<div class="t" style="left:1412px;top:955px;font-size:21px">xie16</div>
<div class="t" style="left:1712px;top:955px;font-size:21px">–</div>
<div class="row" style="top:998px;background:#fff"></div>
<div class="cb" style="top:1020.5px"><svg width="21" height="21" viewBox="0 0 21 21"><path d="M3.9 9.9 L8.2 14.2 L16.3 5.6" fill="none" stroke="#fff" stroke-width="2.5" stroke-linecap="square"/></svg></div>
<div class="t lnk" style="left:339px;top:1020px;font-size:21px;letter-spacing:-0.49px">OBS0012511110SZ</div>
<div class="ib" style="left:520.0px;top:1011.8px"><svg width="36" height="40" viewBox="0 0 36 40"><path d="M16.9 10.6 L11.6 13.8 Q10.9 14.3 10.9 15.1 V22.3 Q10.9 23.1 11.6 23.5 L18 27.5 Q18.8 28 19.6 27.5 L25.8 24 Q26.6 23.5 26.6 22.6 V21.3" fill="none" stroke="#3a30ee" stroke-width="2.6" stroke-linecap="round" stroke-linejoin="round"/><path d="M23.9 9.2 Q25 12.7 28.5 13.8 Q25 14.9 23.9 18.3 Q22.8 14.9 19.3 13.8 Q22.8 12.7 23.9 9.2 Z" fill="#3a30ee" stroke="#3a30ee" stroke-width="0.8" stroke-linejoin="round"/></svg></div>
<div class="t" style="left:692px;top:1021px;font-size:21px">test</div>
<div class="t" style="left:872px;top:1021px;font-size:21px">2</div>
<div class="t lnk" style="left:1052px;top:1021px;font-size:21px">多个(2)</div>
<div class="t lnk" style="left:1412px;top:1021px;font-size:21px">多个(2)</div>
<div class="t lnk" style="left:1712px;top:1021px;font-size:21px">多个(2)</div>
<div class="row" style="top:1064px;background:#fff"></div>
<div class="cb" style="top:1086.5px"><svg width="21" height="21" viewBox="0 0 21 21"><path d="M3.9 9.9 L8.2 14.2 L16.3 5.6" fill="none" stroke="#fff" stroke-width="2.5" stroke-linecap="square"/></svg></div>
<div class="t lnk" style="left:339px;top:1086px;font-size:21px;letter-spacing:-0.42px">OBS0012511110T2</div>
<div class="ib" style="left:519.2px;top:1077.8px"><svg width="36" height="40" viewBox="0 0 36 40"><path d="M16.9 10.6 L11.6 13.8 Q10.9 14.3 10.9 15.1 V22.3 Q10.9 23.1 11.6 23.5 L18 27.5 Q18.8 28 19.6 27.5 L25.8 24 Q26.6 23.5 26.6 22.6 V21.3" fill="none" stroke="#3a30ee" stroke-width="2.6" stroke-linecap="round" stroke-linejoin="round"/><path d="M23.9 9.2 Q25 12.7 28.5 13.8 Q25 14.9 23.9 18.3 Q22.8 14.9 19.3 13.8 Q22.8 12.7 23.9 9.2 Z" fill="#3a30ee" stroke="#3a30ee" stroke-width="0.8" stroke-linejoin="round"/></svg></div>
<div class="t" style="left:692px;top:1087px;font-size:21px">–</div>
<div class="t" style="left:872px;top:1087px;font-size:21px">2</div>
<div class="t" style="left:1052px;top:1087px;font-size:21px;word-spacing:3px">xie16 * 2</div>
<div class="t" style="left:1412px;top:1087px;font-size:21px">xie16</div>
<div class="t" style="left:1712px;top:1087px;font-size:21px">–</div>
<div class="row" style="top:1130px;background:#fff"></div>
<div class="cb" style="top:1152.5px"><svg width="21" height="21" viewBox="0 0 21 21"><path d="M3.9 9.9 L8.2 14.2 L16.3 5.6" fill="none" stroke="#fff" stroke-width="2.5" stroke-linecap="square"/></svg></div>
<div class="t lnk" style="left:339px;top:1152px;font-size:21px;letter-spacing:-0.42px">OBS0012511110T0</div>
<div class="ib" style="left:519.2px;top:1143.8px"><svg width="36" height="40" viewBox="0 0 36 40"><path d="M16.9 10.6 L11.6 13.8 Q10.9 14.3 10.9 15.1 V22.3 Q10.9 23.1 11.6 23.5 L18 27.5 Q18.8 28 19.6 27.5 L25.8 24 Q26.6 23.5 26.6 22.6 V21.3" fill="none" stroke="#3a30ee" stroke-width="2.6" stroke-linecap="round" stroke-linejoin="round"/><path d="M23.9 9.2 Q25 12.7 28.5 13.8 Q25 14.9 23.9 18.3 Q22.8 14.9 19.3 13.8 Q22.8 12.7 23.9 9.2 Z" fill="#3a30ee" stroke="#3a30ee" stroke-width="0.8" stroke-linejoin="round"/></svg></div>
<div class="t" style="left:692px;top:1153px;font-size:21px">test</div>
<div class="t" style="left:872px;top:1153px;font-size:21px">2</div>
<div class="t lnk" style="left:1052px;top:1153px;font-size:21px">多个(2)</div>
<div class="t lnk" style="left:1412px;top:1153px;font-size:21px">多个(2)</div>
<div class="t lnk" style="left:1712px;top:1153px;font-size:21px">多个(2)</div>
<div class="row" style="top:1196px;background:#fff"></div>
<div class="cb" style="top:1218.5px"><svg width="21" height="21" viewBox="0 0 21 21"><path d="M3.9 9.9 L8.2 14.2 L16.3 5.6" fill="none" stroke="#fff" stroke-width="2.5" stroke-linecap="square"/></svg></div>
<div class="t lnk" style="left:339px;top:1218px;font-size:21px;letter-spacing:-0.42px">OBS0012511110T3</div>
<div class="ib" style="left:519.2px;top:1209.8px"><svg width="36" height="40" viewBox="0 0 36 40"><path d="M16.9 10.6 L11.6 13.8 Q10.9 14.3 10.9 15.1 V22.3 Q10.9 23.1 11.6 23.5 L18 27.5 Q18.8 28 19.6 27.5 L25.8 24 Q26.6 23.5 26.6 22.6 V21.3" fill="none" stroke="#3a30ee" stroke-width="2.6" stroke-linecap="round" stroke-linejoin="round"/><path d="M23.9 9.2 Q25 12.7 28.5 13.8 Q25 14.9 23.9 18.3 Q22.8 14.9 19.3 13.8 Q22.8 12.7 23.9 9.2 Z" fill="#3a30ee" stroke="#3a30ee" stroke-width="0.8" stroke-linejoin="round"/></svg></div>
<div class="t" style="left:692px;top:1219px;font-size:21px">–</div>
<div class="t" style="left:872px;top:1219px;font-size:21px">2</div>
<div class="t" style="left:1052px;top:1219px;font-size:21px;word-spacing:3px">xie16 * 2</div>
<div class="t" style="left:1412px;top:1219px;font-size:21px">xie16</div>
<div class="t" style="left:1712px;top:1219px;font-size:21px">–</div>
<div class="row" style="top:1262px;background:#fff"></div>
<div class="cb" style="top:1284.5px"><svg width="21" height="21" viewBox="0 0 21 21"><path d="M3.9 9.9 L8.2 14.2 L16.3 5.6" fill="none" stroke="#fff" stroke-width="2.5" stroke-linecap="square"/></svg></div>
<div class="t lnk" style="left:339px;top:1284px;font-size:21px;letter-spacing:-0.56px">OBS0012511110SS</div>
<div class="ib" style="left:520.2px;top:1275.8px"><svg width="36" height="40" viewBox="0 0 36 40"><path d="M16.9 10.6 L11.6 13.8 Q10.9 14.3 10.9 15.1 V22.3 Q10.9 23.1 11.6 23.5 L18 27.5 Q18.8 28 19.6 27.5 L25.8 24 Q26.6 23.5 26.6 22.6 V21.3" fill="none" stroke="#3a30ee" stroke-width="2.6" stroke-linecap="round" stroke-linejoin="round"/><path d="M23.9 9.2 Q25 12.7 28.5 13.8 Q25 14.9 23.9 18.3 Q22.8 14.9 19.3 13.8 Q22.8 12.7 23.9 9.2 Z" fill="#3a30ee" stroke="#3a30ee" stroke-width="0.8" stroke-linejoin="round"/></svg></div>
<div class="t" style="left:692px;top:1285px;font-size:21px">–</div>
<div class="t" style="left:872px;top:1285px;font-size:21px">2</div>
<div class="t lnk" style="left:1052px;top:1285px;font-size:21px">多个(2)</div>
<div class="t lnk" style="left:1412px;top:1285px;font-size:21px">多个(2)</div>
<div class="t lnk" style="left:1712px;top:1285px;font-size:21px">多个(2)</div>
<div class="row" style="top:1328px;background:#fff"></div>
<div class="cb" style="top:1350.5px"><svg width="21" height="21" viewBox="0 0 21 21"><path d="M3.9 9.9 L8.2 14.2 L16.3 5.6" fill="none" stroke="#fff" stroke-width="2.5" stroke-linecap="square"/></svg></div>
<div class="t lnk" style="left:339px;top:1350px;font-size:21px;letter-spacing:-0.66px">OBS0012511110T1</div>
<div class="ib" style="left:515.1px;top:1341.8px"><svg width="36" height="40" viewBox="0 0 36 40"><path d="M16.9 10.6 L11.6 13.8 Q10.9 14.3 10.9 15.1 V22.3 Q10.9 23.1 11.6 23.5 L18 27.5 Q18.8 28 19.6 27.5 L25.8 24 Q26.6 23.5 26.6 22.6 V21.3" fill="none" stroke="#3a30ee" stroke-width="2.6" stroke-linecap="round" stroke-linejoin="round"/><path d="M23.9 9.2 Q25 12.7 28.5 13.8 Q25 14.9 23.9 18.3 Q22.8 14.9 19.3 13.8 Q22.8 12.7 23.9 9.2 Z" fill="#3a30ee" stroke="#3a30ee" stroke-width="0.8" stroke-linejoin="round"/></svg></div>
<div class="t" style="left:692px;top:1351px;font-size:21px">openapi创建<span style="letter-spacing:1.6px">...</span></div>
<div class="t" style="left:872px;top:1351px;font-size:21px">2</div>
<div class="t" style="left:1052px;top:1351px;font-size:21px;word-spacing:3px">xie16 * 2</div>
<div class="t" style="left:1412px;top:1351px;font-size:21px">xie16</div>
<div class="t" style="left:1712px;top:1351px;font-size:21px">–</div>
<div class="abs" style="left:267px;top:1412.5px;width:1701px;height:1px;background:#e3e5ea"></div>
<div class="t" style="left:340px;top:1433px;font-size:21px;-webkit-text-stroke:0.7px #1d2129">总计</div>
<div class="t" style="left:871px;top:1434px;font-size:21.5px;letter-spacing:-0.9px;-webkit-text-stroke:0.55px #1d2129">11100</div>
<div class="abs" style="left:267px;top:1472px;width:1701px;height:21px;background:#f1f1f1;border-top:1px solid #e6e6e6;border-bottom:1px solid #e6e6e6"></div>
<div class="abs" style="left:274px;top:1479px;width:1042px;height:13px;background:#c1c1c1;border-radius:7px"></div>
<div class="abs" style="left:288px;top:1522px;width:21px;height:21px;background:#0a58f4;border-radius:3.5px"><div style="position:absolute;left:5px;top:9.2px;width:11px;height:2.6px;background:#fff;border-radius:1px"></div></div>
<div class="t" style="left:323px;top:1523px;font-size:21px;color:#3f4550">跨页全选</div>
<div class="abs" style="left:268px;top:477px;width:183px;height:97px;background:#fff;border-radius:6px;box-shadow:0 6px 16px rgba(0,0,0,0.12)"></div>
<div class="t" style="left:286.5px;top:487px;font-size:21px;color:#3c3f45">按勾选生成波次</div>
<div class="t" style="left:286.5px;top:535px;font-size:21px;color:#3c3f45">按规则生成波次</div>
<div class="abs" style="left:265px;top:477px;width:186px;height:39px;background:#fff"></div>
<div class="t" style="left:286.5px;top:487px;font-size:21px;color:#3c3f45">按勾选生成波次</div>
<div class="abs" style="left:251.5px;top:463.8px;width:220px;height:65.4px;border:13.8px solid #fe0000;border-radius:8px"></div>
<div class="t" style="left:279px;top:245px;font-family:'Liberation Serif',serif;font-size:27px;letter-spacing:10px;color:rgba(110,110,110,0.12);transform:translate(-50%,-50%) rotate(-23deg)">郑永晟</div>
<div class="t" style="left:279px;top:628px;font-family:'Liberation Serif',serif;font-size:27px;letter-spacing:10px;color:rgba(110,110,110,0.12);transform:translate(-50%,-50%) rotate(-23deg)">郑永晟</div>
<div class="t" style="left:279px;top:1010px;font-family:'Liberation Serif',serif;font-size:27px;letter-spacing:10px;color:rgba(110,110,110,0.12);transform:translate(-50%,-50%) rotate(-23deg)">郑永晟</div>
<div class="t" style="left:279px;top:1393px;font-family:'Liberation Serif',serif;font-size:27px;letter-spacing:10px;color:rgba(110,110,110,0.12);transform:translate(-50%,-50%) rotate(-23deg)">郑永晟</div>
<div class="t" style="left:866px;top:245px;font-family:'Liberation Serif',serif;font-size:27px;letter-spacing:10px;color:rgba(110,110,110,0.12);transform:translate(-50%,-50%) rotate(-23deg)">郑永晟</div>
<div class="t" style="left:866px;top:628px;font-family:'Liberation Serif',serif;font-size:27px;letter-spacing:10px;color:rgba(110,110,110,0.12);transform:translate(-50%,-50%) rotate(-23deg)">郑永晟</div>
<div class="t" style="left:866px;top:1010px;font-family:'Liberation Serif',serif;font-size:27px;letter-spacing:10px;color:rgba(110,110,110,0.12);transform:translate(-50%,-50%) rotate(-23deg)">郑永晟</div>
<div class="t" style="left:866px;top:1393px;font-family:'Liberation Serif',serif;font-size:27px;letter-spacing:10px;color:rgba(110,110,110,0.12);transform:translate(-50%,-50%) rotate(-23deg)">郑永晟</div>
<div class="t" style="left:1455px;top:245px;font-family:'Liberation Serif',serif;font-size:27px;letter-spacing:10px;color:rgba(110,110,110,0.12);transform:translate(-50%,-50%) rotate(-23deg)">郑永晟</div>
<div class="t" style="left:1455px;top:628px;font-family:'Liberation Serif',serif;font-size:27px;letter-spacing:10px;color:rgba(110,110,110,0.12);transform:translate(-50%,-50%) rotate(-23deg)">郑永晟</div>
<div class="t" style="left:1455px;top:1010px;font-family:'Liberation Serif',serif;font-size:27px;letter-spacing:10px;color:rgba(110,110,110,0.12);transform:translate(-50%,-50%) rotate(-23deg)">郑永晟</div>
<div class="t" style="left:1455px;top:1393px;font-family:'Liberation Serif',serif;font-size:27px;letter-spacing:10px;color:rgba(110,110,110,0.12);transform:translate(-50%,-50%) rotate(-23deg)">郑永晟</div>
<div class="t" style="left:350px;top:178px;font-size:20px;color:rgba(110,110,110,0.12);transform:translate(-50%,-50%) rotate(-25deg)">pm_1071</div>
<div class="t" style="left:350px;top:418px;font-size:20px;color:rgba(110,110,110,0.12);transform:translate(-50%,-50%) rotate(-25deg)">pm_1071</div>
<div class="t" style="left:350px;top:660px;font-size:20px;color:rgba(110,110,110,0.12);transform:translate(-50%,-50%) rotate(-25deg)">pm_1071</div>
<div class="t" style="left:350px;top:900px;font-size:20px;color:rgba(110,110,110,0.12);transform:translate(-50%,-50%) rotate(-25deg)">pm_1071</div>
<div class="t" style="left:350px;top:1139px;font-size:20px;color:rgba(110,110,110,0.12);transform:translate(-50%,-50%) rotate(-25deg)">pm_1071</div>
<div class="t" style="left:350px;top:1380px;font-size:20px;color:rgba(110,110,110,0.12);transform:translate(-50%,-50%) rotate(-25deg)">pm_1071</div>
<div class="t" style="left:949px;top:178px;font-size:20px;color:rgba(110,110,110,0.12);transform:translate(-50%,-50%) rotate(-25deg)">pm_1071</div>
<div class="t" style="left:949px;top:418px;font-size:20px;color:rgba(110,110,110,0.12);transform:translate(-50%,-50%) rotate(-25deg)">pm_1071</div>
<div class="t" style="left:949px;top:660px;font-size:20px;color:rgba(110,110,110,0.12);transform:translate(-50%,-50%) rotate(-25deg)">pm_1071</div>
<div class="t" style="left:949px;top:900px;font-size:20px;color:rgba(110,110,110,0.12);transform:translate(-50%,-50%) rotate(-25deg)">pm_1071</div>
<div class="t" style="left:949px;top:1139px;font-size:20px;color:rgba(110,110,110,0.12);transform:translate(-50%,-50%) rotate(-25deg)">pm_1071</div>
<div class="t" style="left:949px;top:1380px;font-size:20px;color:rgba(110,110,110,0.12);transform:translate(-50%,-50%) rotate(-25deg)">pm_1071</div>
<div class="t" style="left:1550px;top:178px;font-size:20px;color:rgba(110,110,110,0.12);transform:translate(-50%,-50%) rotate(-25deg)">pm_1071</div>
<div class="t" style="left:1550px;top:418px;font-size:20px;color:rgba(110,110,110,0.12);transform:translate(-50%,-50%) rotate(-25deg)">pm_1071</div>
<div class="t" style="left:1550px;top:660px;font-size:20px;color:rgba(110,110,110,0.12);transform:translate(-50%,-50%) rotate(-25deg)">pm_1071</div>
<div class="t" style="left:1550px;top:900px;font-size:20px;color:rgba(110,110,110,0.12);transform:translate(-50%,-50%) rotate(-25deg)">pm_1071</div>
<div class="t" style="left:1550px;top:1139px;font-size:20px;color:rgba(110,110,110,0.12);transform:translate(-50%,-50%) rotate(-25deg)">pm_1071</div>
<div class="t" style="left:1550px;top:1380px;font-size:20px;color:rgba(110,110,110,0.12);transform:translate(-50%,-50%) rotate(-25deg)">pm_1071</div>
</body></html>
